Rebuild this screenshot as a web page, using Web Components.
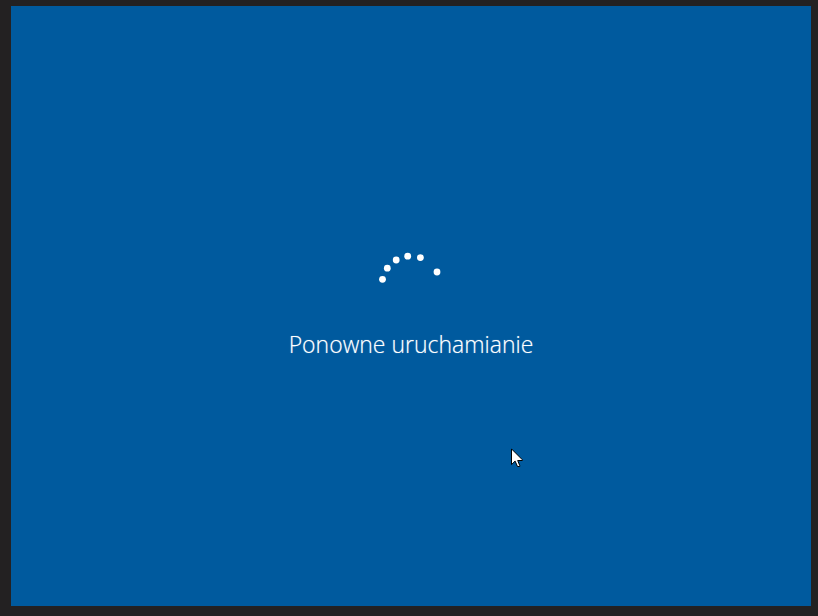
<!DOCTYPE html>
<html lang="pl">
<head>
<meta charset="utf-8">
<title>Ponowne uruchamianie</title>
<style>
html, body { height: 100%; margin: 0; }
body { background: #232122; font-family: "Open Sans", "Noto Sans", sans-serif; }
</style>
</head>
<body>
<restart-screen>
  <progress-ring slot="indicator"></progress-ring>
  <status-text>Ponowne uruchamianie</status-text>
  <mouse-pointer slot="pointer"></mouse-pointer>
</restart-screen>
<script>
const define = (name, html) => customElements.define(name, class extends HTMLElement {
  constructor() {
    super();
    this.attachShadow({ mode: "open" }).innerHTML = html;
  }
});

define("restart-screen", `
<style>
  :host { display: flex; box-sizing: border-box; height: 100%; padding: 6px 7px 10px 11px; }
  main { flex: 1; position: relative; display: flex; flex-direction: column; align-items: center;
    justify-content: center; gap: 8px; background: #005a9e; color: #fff; }
</style>
<main>
  <slot name="indicator"></slot>
  <slot></slot>
  <slot name="pointer"></slot>
</main>`);

define("progress-ring", `
<style>
  :host { display: block; }
  svg { display: block; width: 68px; height: 68px; }
</style>
<svg viewBox="-34 -34 68 68" fill="#fff" aria-hidden="true">
  <circle cx="-28.5" cy="-5.7" r="3.4"/>
  <circle cx="-23.7" cy="-16.8" r="3.4"/>
  <circle cx="-14.8" cy="-25" r="3.4"/>
  <circle cx="-3.3" cy="-28.8" r="3.4"/>
  <circle cx="9.4" cy="-27.4" r="3.4"/>
  <circle cx="26" cy="-13" r="3.4"/>
</svg>`);

define("status-text", `
<style>
  :host { display: block; }
  p { margin: 0; font-size: 23px; font-weight: 300; line-height: 34px; text-align: center;
    text-shadow: 0 0 1px rgb(255 255 255 / 50%); }
</style>
<p role="status"><slot></slot></p>`);

define("mouse-pointer", `
<style>
  :host { position: absolute; left: 500px; top: 442px; }
  svg { display: block; width: 12px; height: 20px; }
</style>
<svg viewBox="0 0 12 20" aria-hidden="true">
  <path d="M.5 .9V16.6L4.1 13.1L6.5 18.5H8.7V17.4L6.7 12.5H11.4V11.8Z" fill="#fff" stroke="#000"/>
</svg>`);
</script>
</body>
</html>
